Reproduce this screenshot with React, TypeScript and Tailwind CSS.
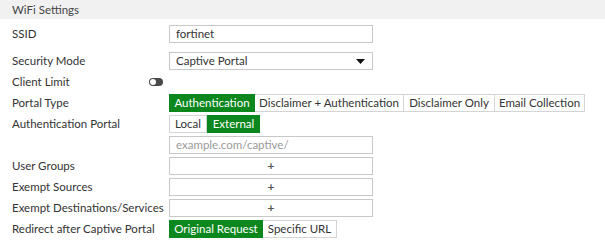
import React from "react";

const Label = ({ children }: { children: React.ReactNode }) => (
  <div className="w-[169px] shrink-0 pl-[12px] text-[11.5px] leading-none text-[#333] whitespace-nowrap">{children}</div>
);

const Row = ({ label, children, className = "" }: { label?: string; children: React.ReactNode; className?: string }) => (
  <div className={"flex items-center h-[18px] " + className}>
    <Label>{label}</Label>
    {children}
  </div>
);

type Item = { t: string; w: number };

const Seg = ({ items, active }: { items: Item[]; active: number }) => (
  <div className="flex h-[18px]">
    {items.map((it, i) =>
      i === active ? (
        <div key={it.t} style={{ width: it.w }} className="flex items-center justify-center bg-[#0b871d] text-white border border-[#0b871d] text-[11.5px] leading-none whitespace-nowrap">
          {it.t}
        </div>
      ) : (
        <div key={it.t} style={{ width: it.w }} className="flex items-center justify-center bg-white text-[#333] border border-[#d4d4d4] border-l-0 first:border-l text-[11.5px] leading-none whitespace-nowrap">
          {it.t}
        </div>
      )
    )}
  </div>
);

const Plus = () => (
  <div className="w-[204px] h-[18px] border border-[#c8c8c8] bg-white flex items-center justify-center text-[#555] text-[12px] font-bold leading-none">
    +
  </div>
);

export default function App() {
  return (
    <div className="w-[605px] h-[245px] bg-white overflow-hidden" style={{ fontFamily: "Lato, 'Open Sans', sans-serif" }}>
      <div className="h-[19px] bg-[#f1f1f1] flex items-center pl-[12px] text-[11.5px] text-[#444] leading-none">WiFi Settings</div>
      <div className="flex flex-col">
        <Row label="SSID" className="mt-[6px]">
          <div className="w-[204px] h-[18px] border border-[#c8c8c8] flex items-center pl-[6px] text-[11.5px] text-[#333] leading-none">fortinet</div>
        </Row>
        <Row label="Security Mode" className="mt-[9px]">
          <div className="w-[204px] h-[18px] border border-[#c8c8c8] flex items-center justify-between pl-[6px] pr-[7px] text-[11.5px] text-[#333] leading-none">
            <span>Captive Portal</span>
            <svg width="9" height="5" viewBox="0 0 9 5"><path d="M0 0h9L4.5 5z" fill="#111" /></svg>
          </div>
        </Row>
        <Row label="Client Limit" className="mt-[3px]">
          <div className="-ml-[20px] relative w-[14px] h-[8px] rounded-full bg-[#4a4a4a]">
            <div className="absolute left-[1px] top-[1px] w-[6px] h-[6px] rounded-full bg-white" />
          </div>
        </Row>
        <Row label="Portal Type" className="mt-[3px]">
          <Seg
            items={[
              { t: "Authentication", w: 86 },
              { t: "Disclaimer + Authentication", w: 149 },
              { t: "Disclaimer Only", w: 91 },
              { t: "Email Collection", w: 90 },
            ]}
            active={0}
          />
        </Row>
        <Row label="Authentication Portal" className="mt-[3px]">
          <Seg items={[{ t: "Local", w: 38 }, { t: "External", w: 53 }]} active={1} />
        </Row>
        <Row className="mt-[3px]">
          <div className="w-[204px] h-[18px] border border-[#c8c8c8] flex items-center pl-[6px] text-[11.5px] text-[#9a9a9a] leading-none">example.com/captive/</div>
        </Row>
        <Row label="User Groups" className="mt-[3px]">
          <Plus />
        </Row>
        <Row label="Exempt Sources" className="mt-[3px]">
          <Plus />
        </Row>
        <Row label="Exempt Destinations/Services" className="mt-[3px]">
          <Plus />
        </Row>
        <Row label="Redirect after Captive Portal" className="mt-[3px]">
          <Seg items={[{ t: "Original Request", w: 94 }, { t: "Specific URL", w: 74 }]} active={0} />
        </Row>
      </div>
    </div>
  );
}
